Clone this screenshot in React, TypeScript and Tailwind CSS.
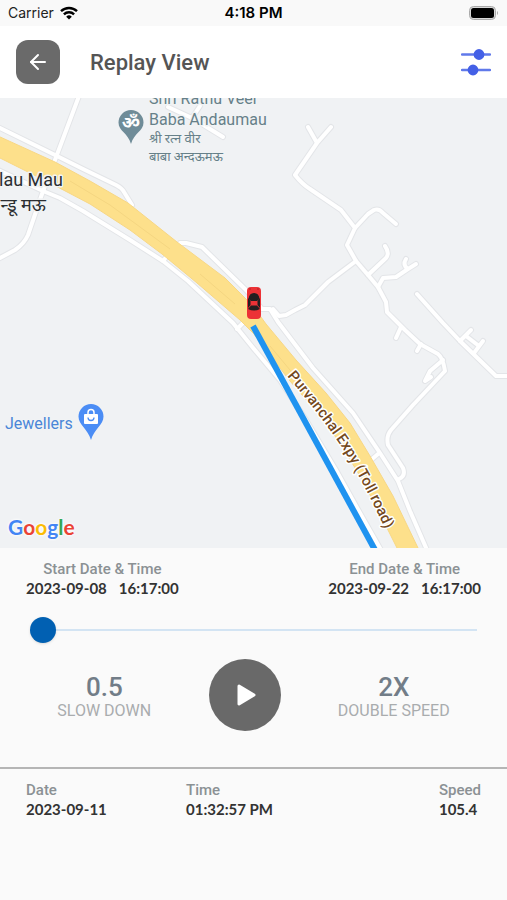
import { useState } from 'react';
import { ArrowLeft } from 'lucide-react';

const roads = [
  'M79 -2 L55 62 L42 96 L28 137 Q24 146 15 152 L-2 161',
  'M-2 29 L55 57 L83 71 L116 87 Q122 90 124 94 L132 107',
  'M-2 72 L43 93 L60 100 L83 113 L130 142 L163 163 L188 183 L233 225 L254 251 L280 282 L306 322 L336 372 L360 415 L381 452',
  'M163 163 L168 157 M237 231 L243 225',
  'M180 145 L186 145 L202 149 L247 193 L262 211 L270 211 L278 224 L313 270 L353 315 L380 355 L398 383 L410 413 L427 452',
  'M378 356 L371 362',
  'M168 9 L192 20 L200 8 M192 20 L223 39',
  'M308 29 L317 45 M331 29 L317 45 L295 77 Q302 86 310 91 L341 112 L355 130 L347 147 L356 163 L368 177 L378 189 L386 204 L387 214 L405 232 L420 246 L438 256 Q443 260 445 273 L413 307 L391 332 Q386 338 388 347 L403 370 Q406 378 399 381',
  'M355 130 L368 116 L374 112 Q379 110 383 115 L396 126',
  'M368 177 L386 160 Q390 155 385 148',
  'M378 189 L383 180 L396 179 L408 171 L416 166 M408 171 Q402 167 406 161',
  'M356 163 L328 184 L305 207 L295 212 L286 217 L279 218 L273 211',
  'M417 196 L443 225 L460 243 L496 278 L600 279',
  'M460 243 L471 232 M466 238 L479 248 M474 255 L483 243',
  'M401 229 L396 240 M421 246 L417 253',
  'M443 262 L430 273 L425 283 L431 279',
];

const highway =
  'M-2 38 L55 64 L90 83 L128 105 L177 144 L225 180 L253 208 L266 226 L296 262 L326 295 L350 325 L370 358 L393 398 L419 452 L398 452 L378 412 L360 378 L338 342 L315 312 L290 283 L270 257 L254 236 L240 222 L197 185 L162 156 L130 132 L90 106 L50 85 L-2 59 Z';

const halo = 'stroke-[#f1f3f4] stroke-[3px] [paint-order:stroke] [stroke-linejoin:round]';

const RouteMap = () => (
  <svg
    className="absolute inset-0 h-full w-full font-[Roboto,'Noto_Sans_Devanagari','Noto_Sans',sans-serif]"
    viewBox="0 0 507 450"
    preserveAspectRatio="xMidYMid slice"
    role="img"
    aria-label="Map"
  >
    <rect x="-500" y="-500" width="1500" height="1500" fill="#f0f2f4" />
    <g fill="none" strokeLinecap="round" strokeLinejoin="round">
      {roads.map((d) => (
        <path key={d} d={d} stroke="#e3e5e8" strokeWidth="6" />
      ))}
      {roads.map((d) => (
        <path key={d} d={d} stroke="#ffffff" strokeWidth="4" />
      ))}
    </g>
    <path d={highway} fill="#fde08b" stroke="#f8d784" strokeWidth="1" />
    <path
      d="M70 83 L110 107 L170 151 M200 176 L235 206 M270 248 L290 272 L330 318"
      fill="none"
      stroke="#f5d681"
      strokeWidth="1"
    />
    <path d="M253 228 L375 452" stroke="#1f93f0" strokeWidth="6" />

    {/* car */}
    <g>
      <rect x="247" y="189" width="14" height="32" rx="4" fill="#ec3236" />
      <path d="M248.500 201 Q249 195 254 195 Q259 195 259.500 201 L257 203 H251 Z" fill="#231f20" />
      <path d="M248 200 L250.500 203 V207 L248 210 Z M260 200 L257.500 203 V207 L260 210 Z" fill="#231f20" />
      <path d="M251 207.500 H257 L260 211 Q254 214 248 211 Z" fill="#231f20" />
      <path d="M249 191 h2 M257 191 h2" stroke="#b51f24" strokeWidth="1" />
    </g>

    {/* temple */}
    <path d="M131 12 A12.5 12.5 0 0 0 118.500 24.500 C118.500 33 128 35 131 46 C134 35 143.500 33 143.500 24.500 A12.500 12.500 0 0 0 131 12 Z" fill="#6f8c98" />
    <text x="131" y="31" textAnchor="middle" fontSize="18" fontWeight="700" fill="#fff">ॐ</text>
    <g fill="#668089" className={halo}>
      <text x="149" y="6" fontSize="16">Shri Rathu Veer</text>
      <text x="149" y="27" fontSize="16">Baba Andaumau</text>
      <text x="149" y="45" fontSize="13">श्री रत्न वीर</text>
      <text x="149" y="63" fontSize="13">बाबा अन्दऊमऊ</text>
    </g>

    <g fill="#2b2e31" textAnchor="end" className={halo}>
      <text x="63" y="88" fontSize="18">lau Mau</text>
      <text x="46" y="113" fontSize="18">न्डू मऊ</text>
    </g>

    {/* shop */}
    <text x="5" y="331" fontSize="16" fill="#4a86d8" className={halo}>Jewellers</text>
    <path d="M91 306 A12.500 12.500 0 0 0 78.500 318.500 C78.500 327 88 331 91 342 C94 331 103.500 327 103.500 318.500 A12.500 12.500 0 0 0 91 306 Z" fill="#4b8df5" />
    <rect x="84" y="316" width="14" height="10" rx="1" fill="#fff" />
    <path d="M88 316 V314.500 a3 3 0 0 1 6 0 V316" fill="none" stroke="#fff" strokeWidth="1.500" />
    <path d="M88 319.500 a3 3 0 0 0 6 0" fill="none" stroke="#4b8df5" strokeWidth="1.300" />

    <path id="expressway" d="M287 278 Q318 314 341 348 Q366 387 392 447" fill="none" />
    <text fontSize="15" fontWeight="500" fill="#74491d" className="stroke-white stroke-[3px] [paint-order:stroke] [stroke-linejoin:round]">
      <textPath href="#expressway">Purvanchal Expy (Toll road)</textPath>
    </text>
  </svg>
);

const StatusBar = () => (
  <div className="grid h-[26px] grid-cols-3 items-center bg-[#f9f9f9] px-2 font-[Inter,sans-serif] text-sm text-[#222]">
    <div className="flex items-center gap-1.5">
      Carrier
      <svg className="h-[14px] w-[18px]" viewBox="0 0 18 14" fill="none" stroke="#000" strokeWidth="2.400" aria-hidden="true">
        <path d="M1 5.200 a11.500 11.500 0 0 1 16 0" />
        <path d="M3.900 8.300 a7.300 7.300 0 0 1 10.200 0" />
        <path d="M9 13.500 L6.200 10.700 a4 4 0 0 1 5.600 0 Z" fill="#000" stroke="none" />
      </svg>
    </div>
    <div className="text-center text-[15px] font-semibold text-black">4:18 PM</div>
    <svg className="h-[14px] w-[30px] justify-self-end" viewBox="0 0 30 14" aria-hidden="true">
      <rect x="0.500" y="0.500" width="26" height="13" rx="4" fill="#d9d9d9" stroke="#aaa" />
      <rect x="2" y="2" width="23" height="10" rx="2.500" fill="#000" />
      <path d="M28 5 a2.500 2.500 0 0 1 0 4 Z" fill="#aaa" />
    </svg>
  </div>
);

const Field = ({ label, children, center = false }) => (
  <div className={center ? 'text-center' : ''}>
    <div className="font-[Roboto,sans-serif] text-[15px] leading-5 font-medium text-[#8b9194]">{label}</div>
    <div className="flex gap-3 font-[Lato,sans-serif] text-[15px] leading-[18px] font-bold text-[#333]">{children}</div>
  </div>
);

const SpeedButton = ({ value, label }) => (
  <button type="button" className="flex flex-col items-center pt-1 font-[Roboto,sans-serif]">
    <span className="text-[26px] leading-7 font-medium text-[#727d88]">{value}</span>
    <span className="text-base leading-5 text-[#a9acae]">{label}</span>
  </button>
);

export default function App() {
  const [position, setPosition] = useState(0);
  return (
    <div className="flex min-h-screen flex-col bg-[#fafafa]">
      <StatusBar />
      <header className="flex h-[72px] items-center bg-white px-4">
        <button type="button" aria-label="Back" className="flex size-11 items-center justify-center rounded-xl bg-[#6a6a6a] text-white">
          <ArrowLeft size={24} strokeWidth={2} />
        </button>
        <h1 className="ml-[30px] font-[Roboto,sans-serif] text-[22px] font-medium text-[#555]">Replay View</h1>
        <button type="button" aria-label="Filters" className="ml-auto">
          <svg className="h-7 w-[30px]" viewBox="0 0 30 28" stroke="#4460e6" strokeWidth="2.400" strokeLinecap="round">
            <path d="M1 6.500 H29 M1 22 H29" stroke="#6079ea" />
            <circle cx="18" cy="6.500" r="4.200" fill="#4460e6" />
            <circle cx="12" cy="22" r="4.200" fill="#4460e6" />
          </svg>
        </button>
      </header>

      <main className="relative min-h-80 flex-1 overflow-hidden">
        <RouteMap />
        <div className="absolute bottom-[7px] left-2 font-[Lato,sans-serif] text-[21px] leading-7 font-bold [text-shadow:0_0_3px_#fff,0_0_3px_#fff]">
          <span className="text-[#4285f4]">G</span>
          <span className="text-[#ea4335]">o</span>
          <span className="text-[#fbbc05]">o</span>
          <span className="text-[#4285f4]">g</span>
          <span className="text-[#34a853]">l</span>
          <span className="text-[#ea4335]">e</span>
        </div>
      </main>

      <section className="pt-[11px]">
        <div className="flex justify-between px-[26px]">
          <Field label="Start Date & Time" center>
            <span>2023-09-08</span>
            <span>16:17:00</span>
          </Field>
          <Field label="End Date & Time" center>
            <span>2023-09-22</span>
            <span>16:17:00</span>
          </Field>
        </div>
        <div className="mt-5 px-[30px]">
          <input
            type="range"
            aria-label="Playback position"
            min={0}
            max={100}
            value={position}
            onChange={(e) => setPosition(Number(e.target.value))}
            className="block h-[26px] w-full appearance-none bg-transparent [&::-webkit-slider-runnable-track]:h-0.5 [&::-webkit-slider-runnable-track]:bg-[#d3e4f3] [&::-webkit-slider-thumb]:-mt-3 [&::-webkit-slider-thumb]:size-[26px] [&::-webkit-slider-thumb]:appearance-none [&::-webkit-slider-thumb]:rounded-full [&::-webkit-slider-thumb]:bg-[#0160b2] [&::-webkit-slider-thumb]:shadow"
          />
        </div>
        <div className="mt-4 flex items-center justify-evenly">
          <SpeedButton value="0.5" label="SLOW DOWN" />
          <button type="button" aria-label="Play" className="flex size-[72px] items-center justify-center rounded-full bg-[#696969]">
            <svg className="size-6" viewBox="0 0 24 24" fill="#fff" stroke="#fff" strokeWidth="3" strokeLinejoin="round">
              <path d="M6 3 L21 12 L6 21 Z" />
            </svg>
          </button>
          <SpeedButton value="2X" label="DOUBLE SPEED" />
        </div>
      </section>

      <section className="mt-9 grid grid-cols-[160px_1fr_auto] border-t-2 border-[#b5b5b5] px-[26px] pt-[11px] pb-[82px]">
        <Field label="Date">2023-09-11</Field>
        <Field label="Time">01:32:57 PM</Field>
        <Field label="Speed">105.4</Field>
      </section>
    </div>
  );
}
